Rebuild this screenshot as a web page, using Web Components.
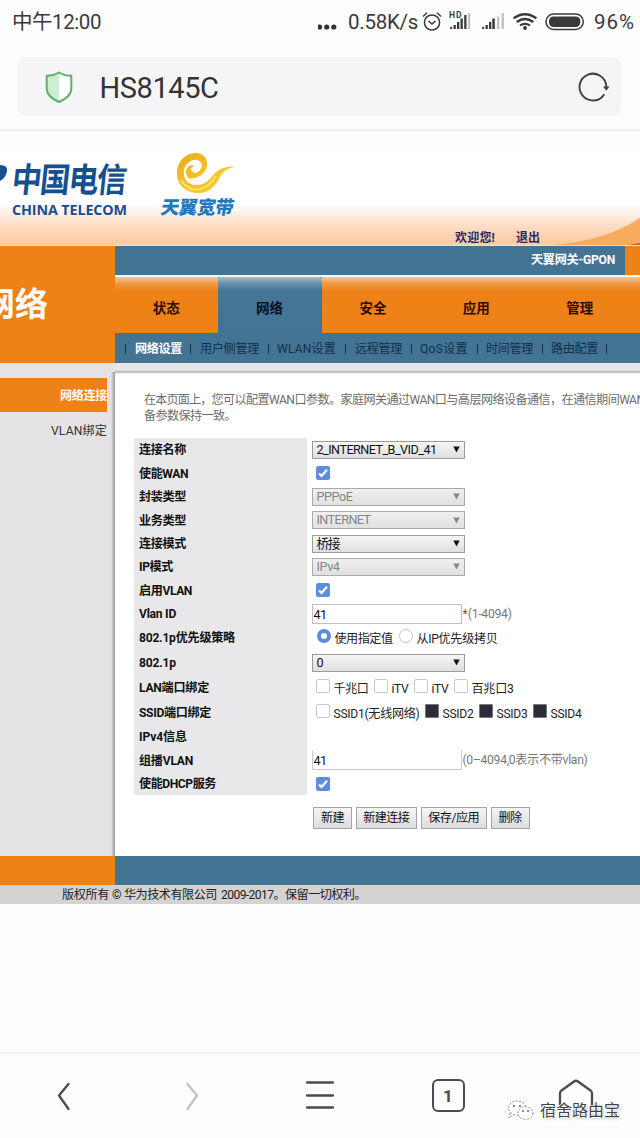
<!DOCTYPE html>
<html lang="zh-CN">
<head>
<meta charset="utf-8">
<title>HS8145C</title>
<style>
html,body{margin:0;padding:0;background:#fdfdfd}
body{width:640px;height:1138px;overflow:hidden;font-family:Roboto,"Noto Sans CJK SC",sans-serif;font-size:12.1px;color:#222}
</style>
</head>
<body>
<phone-screen></phone-screen>
<script>
const define = (name, html) => {
  const t = document.createElement('template');
  t.innerHTML = html;
  customElements.define(name, class extends HTMLElement {
    constructor() {
      super();
      this.attachShadow({mode: 'open'}).appendChild(t.content.cloneNode(true));
    }
  });
};

define('status-bar', `
<style>
:host{display:flex;height:57px;box-sizing:border-box;padding:10px 5px 0 12px;align-items:flex-start;justify-content:space-between;font-size:20.5px;line-height:24px;color:#3a3a3a}
.r{display:flex;align-items:flex-start}
svg{display:block}
</style>
<fit-text w="89">中午12:00</fit-text>
<div class="r">
<svg width="32" height="24"><g fill="#333"><circle cx="1.6" cy="17" r="2.6"/><circle cx="8.700" cy="17" r="2.6"/><circle cx="15.800" cy="17" r="2.6"/></g></svg>
<fit-text w="70" style="margin-left:-1.500px">0.58K/s</fit-text>
<svg width="173" height="24" fill="none" stroke="#3a3a3a" stroke-width="1.5">
<circle cx="14" cy="12.5" r="7.6"/><path d="M10.500 11l3.5 3 3.5-3M5 6.500l4-3.700M23 6.500l-4-3.700"/>
<g fill="#3a3a3a" stroke="none"><path d="M32 19v-1.500l2-1v2.500zM35.500 19v-4h2.300v4zM39 19v-7h2.300v7zM42.500 19v-10.500h2.300v10.500zM46.200 19v-14h2.300v14z"/><path fill="#c4c4c4" d="M50 19v-16h2.300v16z"/>
<path d="M64 19v-1.500l2-1v2.500zM67.500 19v-4h2.300v4zM71 19v-7h2.300v7zM74.300 19v-10.500h2.500v10.500z"/><path fill="#c4c4c4" d="M79 19v-12.500h2.300v12.500zM83.500 19v-16h2.500v16z"/>
<text x="31" y="8" font-size="8.500" font-weight="700" textLength="12.500">HD</text></g>
<path stroke-width="2.300" d="M95.600 8.300q11.400-8.200 22.800 0M98.700 12q8.300-6 16.600 0M102 15.400q5-3.200 10 0"/><circle cx="107" cy="18" r="1.900" fill="#333" stroke="none"/>
<rect x="128" y="4" width="37.300" height="15.500" rx="7.700"/><rect x="131" y="6.400" width="31.300" height="10.700" rx="4.500" fill="#3a3a3a" stroke="none"/>
</svg>
<fit-text w="41" style="margin-left:3px">96%</fit-text>
</div>`);

define('address-bar', `
<style>
:host{display:flex;height:74px;box-sizing:border-box;padding:0 19px 15px 18px;border-bottom:2px solid #f0f0f1;background:#fdfdfd}
.b{display:flex;align-items:center;flex:1;height:59px;border-radius:8px;background:#f5f5f7;color:#333}
.t{flex:1;font-size:29px;margin-left:26.500px;line-height:34px;padding-top:3px}
</style>
<div class="b">
<svg width="28" height="34" style="margin-left:27px"><path fill="#fff" d="M14 2.500q6 3.700 12.300 3.300v13q0 8-12.300 13.200Q1.700 26.800 1.700 18.800v-13Q8 6.200 14 2.500z"/><path fill="#cdeed3" d="M14 2.500v29.500Q1.700 26.800 1.700 18.800v-13Q8 6.200 14 2.500z"/><path fill="none" stroke="#5fae6c" stroke-width="2" d="M14 2.500q6 3.700 12.300 3.300v13q0 8-12.300 13.200Q1.700 26.800 1.700 18.800v-13Q8 6.200 14 2.500z"/></svg>
<div class="t"><fit-text w="119">HS8145C</fit-text></div>
<svg width="34" height="34" style="margin-right:11px" fill="none" stroke="#444" stroke-width="2"><path d="M28.300 24.200a13.400 13.400 0 1 1 2-8v1.500"/><path fill="#444" stroke="none" d="M27 16.500h6.500l-3.200 4.200z"/></svg>
</div>`);

define('brand-banner', `
<style>
:host{display:grid;grid-template:115px/1fr;height:115px;background:linear-gradient(#fefefe 0,#fff 72px,#fef0e6 82px,#fdd9bd 98px,#fcca9f 113px,#f8dcb4 114px,#f8dcb4 115px);overflow:hidden}
:host>*{grid-area:1/1}
.logos{display:flex;gap:32px}
.ct{width:127px;padding:30px 0 0 12px;box-sizing:border-box;color:#17508f;font-weight:700}
.ct fit-text{display:block}
.cn{font-size:30px;line-height:40px;transform:skewX(-6deg) scaleY(1.130)}
.en{font-size:14.300px;line-height:16px;font-weight:700;font-family:"Open Sans",sans-serif;padding-top:1px}
.ty{padding-top:20px;color:#1d78bc;font-weight:900;font-size:18.500px;line-height:20px}
.ty div{transform:skewX(-10deg);margin-left:2px}
.user{display:flex;align-self:end;padding:0 0 1px 455px;gap:21px;color:#242a68;font-weight:700;font-size:12px;line-height:14px}
svg{display:block}
</style>
<svg width="640" height="115"><path fill="#f8aa5f" d="M552 114q54-4 88-27v27z"/><path fill="#9b7044" d="M628 114l12-2v2z"/><path fill="#17508f" d="M0 34q8 0 7 6-1 7-7 10z"/></svg>
<div class="logos">
<div class="ct"><div class="cn"><fit-text w="118">中国电信</fit-text></div><div class="en"><fit-text w="115">CHINA TELECOM</fit-text></div></div>
<div class="ty"><svg width="78" height="47" viewBox="0 0 78 47"><defs><linearGradient id="g" x1="0" y1="0" x2="1" y2="1"><stop offset="0" stop-color="#e9ab20"/><stop offset=".55" stop-color="#f7c52b"/><stop offset="1" stop-color="#f5d22b"/></linearGradient></defs>
<path fill="url(#g)" d="M30 27.500C38 28 47 23 48 15 49 7 44 2 37 2 26 2 18 11 18 22 18 34 27 42 39 42 51 42 57 34 61 26 64 20 69 17 76 15.500 68 15 61 17 56 22 51 28 46 34 38 34 28 34 24 27 25 20 26 12 33 8 38 9 43 10 44 15 41 19 39 22 35 23 33 20 31 18 33 15 36 15 32 13 27 16 27 21 27 25 29 27 30 27.500z"/><path fill="none" stroke="#fbe77e" stroke-width="1.500" d="M22 29q7 12 20 9 8-2 15-13"/></svg><div><fit-text w="76">天翼宽带</fit-text></div></div>
</div>
<div class="user"><fit-text w="40">欢迎您!</fit-text><fit-text w="24">退出</fit-text></div>`);

define('main-tab', `
<style>
:host{display:flex;align-items:center;justify-content:center;flex:0 0 103.400px;height:56px;box-sizing:border-box;padding:3px 1px 0 0;font-size:13.500px;font-weight:700;color:#2c0d08;background:linear-gradient(#f6c8a0 0,#f19a4a 6px,#ee8218 14px,#ee8216)}
:host([on]){background:linear-gradient(#a8c1cf 0,#6a93ad 6px,#447596 14px,#437494);color:#0a1020;border-radius:3px 3px 0 0}
</style><slot></slot>`);

define('top-nav', `
<style>
:host{display:grid;grid-template-columns:115px 1fr;height:117px;width:640px;overflow:hidden;background:#437494}
.h{background:#ee8216;color:#fff;font-size:33px;font-weight:700;line-height:117px;overflow:hidden;white-space:nowrap}
.h fit-text{margin-left:-18px}
.n{min-width:0;overflow:hidden}
.g{display:flex;height:29px;color:#fff;font-weight:700;line-height:29px;justify-content:flex-end}
.o{width:15px;background:#ee8216;margin-left:10px}
.t{display:flex;height:58px;box-sizing:border-box;border-top:2px solid #fbf3ea;overflow:hidden;background:#ee8216}
.s{display:flex;height:30px;align-items:center;padding:2px 0 0 10px;color:#10304a;line-height:24px;box-sizing:border-box}
i{display:block;flex:none;width:1px;height:10px;background:#163450}
.s fit-text{flex:none}
.s b{color:#fff}
</style>
<div class="h"><fit-text w="66">网络</fit-text></div>
<div class="n">
<div class="g"><fit-text w="84">天翼网关-GPON</fit-text><span class="o"></span></div>
<div class="t"><main-tab><fit-text w="27">状态</fit-text></main-tab><main-tab on><fit-text w="27">网络</fit-text></main-tab><main-tab><fit-text w="27">安全</fit-text></main-tab><main-tab><fit-text w="27">应用</fit-text></main-tab><main-tab><fit-text w="27">管理</fit-text></main-tab><main-tab></main-tab></div>
<div class="s"><i></i><b><fit-text w="47" style="margin:0 8px 0 9px">网络设置</fit-text></b><i></i><fit-text w="59" style="margin:0 9px 0 9px">用户侧管理</fit-text><i></i><fit-text w="59" style="margin:0 9px 0 8px">WLAN设置</fit-text><i></i><fit-text w="47" style="margin:0 9px 0 9px">远程管理</fit-text><i></i><fit-text w="48" style="margin:0 9px 0 8px">QoS设置</fit-text><i></i><fit-text w="47" style="margin:0 9px 0 8px">时间管理</fit-text><i></i><fit-text w="47" style="margin:0 8px 0 8px">路由配置</fit-text><i></i></div>
</div>`);

define('side-menu', `
<style>
:host{display:block;width:115px;background:linear-gradient(90deg,transparent 111px,#bdbcbe 113px,#98979b 115px) 0 9px no-repeat,#e4e2e5;padding-top:15px;box-sizing:border-box;text-align:right}
.a{width:107px;height:34px;line-height:36px;background:#ee8216;color:#fff;font-weight:700}
.b{width:107px;line-height:38px;color:#333}
</style><div class="a"><fit-text w="47">网络连接</fit-text></div><div class="b"><fit-text w="56">VLAN绑定</fit-text></div>`);

define('form-row', `
<style>
:host{display:grid;grid-template-columns:172.500px 1fr;height:23.500px;line-height:20px}
.l{background:#e8e8ea;padding:1px 0 0 5px;display:flex;align-items:center;font-weight:700;color:#111}
.v{display:flex;align-items:center;padding:0 0 0 5px;color:#222}
</style><div class="l"><slot name="label"></slot></div><div class="v"><slot></slot></div>`);

define('drop-down', `
<style>
:host{display:flex;width:153px;height:18px;box-sizing:border-box;border:1px solid #9b9b9d;background:linear-gradient(#f5f5f5,#dfdfdf);align-items:center;justify-content:space-between;padding:0 4px;font-size:12.600px;line-height:16px;color:#111}
:host([off]){color:#858585;border-color:#aaa;background:linear-gradient(#f0f0f0,#e0e0e1)}
svg{display:block}
</style><slot></slot><svg width="7" height="7"><path fill="currentColor" d="M.300 .500h6.400L3.500 6.500z"/></svg>`);

define('check-box', `
<style>
:host{display:block;flex:none;width:14px;height:14px;box-sizing:border-box;border:1px solid #c7c7cf;border-radius:2px;background:#fff;margin-left:4px}
:host([on]){background:#5f8ddb;border-color:#5f8ddb}
:host([dark]){background:#2b2d38;border-color:#777;border-radius:1px}
:host([radio]){border-radius:50%}
:host([radio][on]){border:4px solid #5b8cdb;background:#fff}
svg{display:none}
:host([on]:not([radio])) svg{display:block}
</style><svg width="12" height="12"><path d="M2 6.500l2.500 2.500L10 2.800" fill="none" stroke="#fff" stroke-width="2.200"/></svg>`);

define('text-box', `
<style>
:host{display:block;width:150px;height:20px;box-sizing:border-box;border:1px solid #cdb9be;background:#fff;padding-left:1px;line-height:19px;font-size:12.600px;color:#111}
:host([flat]){border-color:#c9c9cc;border-top-color:transparent}
</style><slot></slot>`);

define('push-button', `
<style>
:host{display:flex;flex:none;height:22px;box-sizing:border-box;border:1px solid #a4a4a6;background:linear-gradient(#f5f5f5,#dcdcde);align-items:center;justify-content:center;color:#111;line-height:18px}
</style><slot></slot>`);

define('wan-form', `
<style>
:host{display:block;box-sizing:border-box;border-top:8px solid #e6e6e9;width:525px;height:493px;background:linear-gradient(#aaa,#d8d8d8 2px,#fff 3px);overflow:hidden}
.p{padding:22px 0 0 29px;color:#6c6c6c;line-height:15.500px;white-space:nowrap;height:45px;box-sizing:content-box}
.f{margin-left:19px}
.w{display:flex;align-items:center;position:relative;top:1.500px}
.u{margin-top:-6px}
.hint{color:#777}
.btn{display:flex;gap:3.500px;margin:12px 0 0 198px}
</style>
<div class="p"><fit-text w="67.500">在本页面上，</fit-text><fit-text w="129">您可以配置WAN口参数。</fit-text><fit-text w="221">家庭网关通过WAN口与高层网络设备通信，</fit-text><fit-text w="83">在通信期间WAN</fit-text><br><fit-text w="92">备参数保持一致。</fit-text></div>
<div class="f">
<form-row><fit-text slot="label" w="47">连接名称</fit-text><drop-down><fit-text w="120">2_INTERNET_B_VID_41</fit-text></drop-down></form-row>
<form-row><fit-text slot="label" w="49">使能WAN</fit-text><check-box on></check-box></form-row>
<form-row><fit-text slot="label" w="47">封装类型</fit-text><drop-down off><fit-text w="36">PPPoE</fit-text></drop-down></form-row>
<form-row><fit-text slot="label" w="47">业务类型</fit-text><drop-down off><fit-text w="54">INTERNET</fit-text></drop-down></form-row>
<form-row style="height:23px"><fit-text slot="label" w="47">连接模式</fit-text><drop-down><fit-text w="23">桥接</fit-text></drop-down></form-row>
<form-row><fit-text slot="label" w="34">IP模式</fit-text><drop-down off><fit-text w="23">IPv4</fit-text></drop-down></form-row>
<form-row><fit-text slot="label" w="53">启用VLAN</fit-text><check-box on></check-box></form-row>
<form-row style="height:23px"><fit-text slot="label" w="37">Vlan ID</fit-text><text-box><fit-text w="13">41</fit-text></text-box><span style="color:#b33;margin-left:1px">*</span><fit-text class="hint" w="44">(1-4094)</fit-text></form-row>
<form-row style="height:25px"><fit-text slot="label" w="96">802.1p优先级策略</fit-text><div class="w"><check-box style="margin-left:5px;margin-top:-6px" radio on></check-box><fit-text w="58" style="margin-left:4px">使用指定值</fit-text><check-box style="margin-left:6px;margin-top:-6px" radio></check-box><fit-text w="81" style="margin-left:4px">从IP优先级拷贝</fit-text></div></form-row>
<form-row style="height:25px"><fit-text slot="label" w="37">802.1p</fit-text><drop-down><fit-text w="7">0</fit-text></drop-down></form-row>
<form-row style="height:25px"><fit-text slot="label" w="70">LAN端口绑定</fit-text><div class="w"><check-box class="u"></check-box><fit-text w="35" style="margin-left:4px">千兆口</fit-text><check-box class="u" style="margin-left:5px"></check-box><fit-text w="17" style="margin-left:4px">iTV</fit-text><check-box class="u" style="margin-left:5px"></check-box><fit-text w="17" style="margin-left:4px">iTV</fit-text><check-box class="u" style="margin-left:5px"></check-box><fit-text w="42" style="margin-left:4px">百兆口3</fit-text></div></form-row>
<form-row style="height:25px"><fit-text slot="label" w="72">SSID端口绑定</fit-text><div class="w"><check-box class="u"></check-box><fit-text w="86" style="margin-left:4px">SSID1(无线网络)</fit-text><check-box class="u" dark style="margin-left:5px"></check-box><fit-text w="31" style="margin-left:4px">SSID2</fit-text><check-box class="u" dark style="margin-left:5px"></check-box><fit-text w="31" style="margin-left:4px">SSID3</fit-text><check-box class="u" dark style="margin-left:5px"></check-box><fit-text w="31" style="margin-left:4px">SSID4</fit-text></div></form-row>
<form-row><fit-text slot="label" w="48">IPv4信息</fit-text></form-row>
<form-row><fit-text slot="label" w="54">组播VLAN</fit-text><text-box flat><fit-text w="13">41</fit-text></text-box><fit-text class="hint" style="margin-left:1px" w="125">(0–4094,0表示不带vlan)</fit-text></form-row>
<form-row style="height:23px"><fit-text slot="label" w="77">使能DHCP服务</fit-text><check-box on></check-box></form-row>
</div>
<div class="btn"><push-button style="width:39px"><fit-text w="23">新建</fit-text></push-button><push-button style="width:61.500px"><fit-text w="46">新建连接</fit-text></push-button><push-button style="width:66.500px"><fit-text w="51">保存/应用</fit-text></push-button><push-button style="width:39px"><fit-text w="23">删除</fit-text></push-button></div>`);

define('page-footer', `
<style>
:host{display:block;width:640px;height:48px}
.b{height:29px;background:linear-gradient(90deg,#ee8216 115px,#437494 115px)}
.c{height:19px;line-height:20px;background:#d4d3d1;padding-left:62px;color:#222;box-sizing:border-box;white-space:nowrap}
</style><div class="b"></div><div class="c"><fit-text w="47">版权所有</fit-text><fit-text w="9" style="margin-left:3px">©</fit-text><fit-text w="93" style="margin-left:3px">华为技术有限公司</fit-text><fit-text w="64" style="margin-left:4px">2009-2017。</fit-text><fit-text w="81">保留一切权利。</fit-text></div>`);

define('browser-toolbar', `
<style>
:host{display:grid;grid-template-columns:repeat(5,128px);height:86px;border-top:2px solid #f3f3f3;box-sizing:border-box;margin-top:148px;align-items:start;background:#fdfdfd}
svg{display:block;margin:22px auto 0}
.tab{display:flex;align-items:center;justify-content:center;width:33px;height:33px;margin:25px auto 0;box-sizing:border-box;border:2.500px solid #4c4c4c;border-radius:6px;font-size:17px;font-weight:700;color:#4c4c4c}
.mark{display:flex;align-items:center;position:absolute;left:507px;top:1099px;font-size:16px;line-height:24px;color:#444;text-shadow:1px 1px 0 #fff,-1px 0 0 #fff,2px 2px 2px #ccc}
.mark svg{margin:0 5px 0 0}
</style>
<svg width="40" height="40" fill="none" stroke="#4c4c4c" stroke-width="2.300" stroke-linecap="round" stroke-linejoin="round"><path d="M24.500 8L15 19.500 24.500 33"/></svg>
<svg width="40" height="40" fill="none" stroke="#c2c2c2" stroke-width="2.300" stroke-linecap="round" stroke-linejoin="round"><path d="M15.500 8L25 19.500 15.500 33"/></svg>
<svg width="40" height="40" fill="none" stroke="#4c4c4c" stroke-width="2.300" stroke-linecap="round"><path d="M7 6.500h26M7 19.500h26M7 31.500h26"/></svg>
<div class="tab">1</div>
<svg width="40" height="42" fill="none" stroke="#4c4c4c" stroke-width="2.300" stroke-linejoin="round"><path d="M4 29V17.500q0-2 1.500-3L18 5.500q2-1.500 4 0l12.500 9q1.500 1 1.500 3V29"/></svg>
<div class="mark"><svg width="28" height="24" fill="#fff" stroke="#888" stroke-width="1" stroke-dasharray="2 1.500"><ellipse cx="10" cy="9" rx="8.500" ry="7"/><path d="M3 14l-1 5 4-3"/><ellipse cx="18.500" cy="14" rx="7.500" ry="6.300"/><g fill="#555" stroke="none"><circle cx="7" cy="7" r="1"/><circle cx="13" cy="7" r="1"/><circle cx="16" cy="12" r=".9"/><circle cx="21" cy="12" r=".9"/></g></svg><fit-text w="80">宿舍路由宝</fit-text></div>`);

define('phone-screen', `
<style>
:host{display:block;width:640px;height:1138px;overflow:hidden;position:relative;background:#fdfdfd}
.m{display:grid;grid-template-columns:115px 525px;height:493px}
</style>
<status-bar></status-bar><address-bar></address-bar><brand-banner></brand-banner><top-nav></top-nav>
<div class="m"><side-menu></side-menu><wan-form></wan-form></div>
<page-footer></page-footer><browser-toolbar></browser-toolbar>`);

// Inline label whose letter spacing is adjusted to fill the width given in "w".
customElements.define('fit-text', class extends HTMLElement {
  constructor() {
    super();
    this.attachShadow({mode: 'open'}).innerHTML = '<style>:host{display:inline-block;white-space:nowrap;text-align:left}span{display:inline-block}</style><span><slot></slot></span>';
  }
  connectedCallback() {
    const s = this.shadowRoot.querySelector('span');
    const w = parseFloat(this.getAttribute('w'));
    const n = [...this.textContent].length;
    s.style.letterSpacing = (w - s.getBoundingClientRect().width) / n + 'px';
    this.style.width = w + 'px';
  }
});
</script>
</body>
</html>
